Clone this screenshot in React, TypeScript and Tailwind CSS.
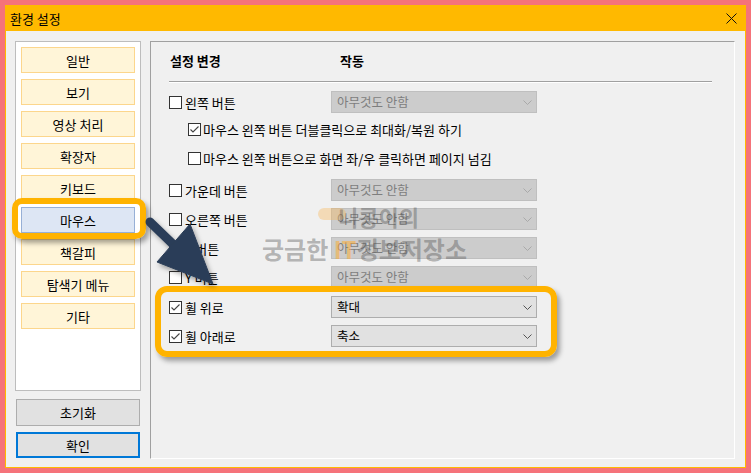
import React from "react";

const font = "font-['Noto_Sans_CJK_KR',sans-serif]";

const menu = ["일반", "보기", "영상 처리", "확장자", "키보드", "마우스", "책갈피", "탐색기 메뉴", "기타"];

function Check({ checked }: { checked?: boolean }) {
  return (
    <span className="w-[13px] h-[13px] shrink-0 border border-[#333333] bg-white flex items-center justify-center">
      {checked && (
        <svg width="11" height="11" viewBox="0 0 11 11">
          <path d="M1.5 5.5 L4 8 L9.5 2.5" fill="none" stroke="#444" strokeWidth="1.1" />
        </svg>
      )}
    </span>
  );
}

function Chevron({ color }: { color: string }) {
  return (
    <svg width="9" height="5" viewBox="0 0 9 5" className="mr-[4px]">
      <path d="M0.5 0.5 L4.5 4.5 L8.5 0.5" fill="none" stroke={color} strokeWidth="1" />
    </svg>
  );
}

function Select({ value, disabled }: { value: string; disabled?: boolean }) {
  return (
    <div
      className={
        disabled
          ? "w-[206px] h-[22px] border border-[#BFBFBF] bg-[#CCCCCC] flex items-center justify-between pl-[5px] text-[#7E7E7E] text-[12.5px]"
          : "w-[206px] h-[22px] border border-[#ADADAD] bg-[#E1E1E1] flex items-center justify-between pl-[5px] text-black text-[12.5px]"
      }
    >
      <span className="leading-none">{value}</span>
      <Chevron color={disabled ? "#A9A9A9" : "#555"} />
    </div>
  );
}

function Row({ label, checked, value, disabled, className }: { label: string; checked?: boolean; value: string; disabled?: boolean; className: string }) {
  return (
    <div className={"flex items-center h-[22px] " + className}>
      <div className="w-[162px] flex items-center gap-[3px]">
        <Check checked={checked} />
        <span className="leading-none">{label}</span>
      </div>
      <Select value={value} disabled={disabled} />
    </div>
  );
}

export default function App() {
  return (
    <div className={"relative w-[751px] h-[473px] bg-[#F5737A] p-[5px] text-[13px] text-black " + font}>
      <div className="flex flex-col h-full border border-[#FFB900]">
        <div className="h-[25px] bg-[#FFB900] flex items-center justify-between pl-[4px] pr-[8px]">
          <span className="leading-none">환경 설정</span>
          <svg width="11" height="11" viewBox="0 0 11 11">
            <path d="M0.5 0.5 L10.5 10.5 M10.5 0.5 L0.5 10.5" stroke="#111" strokeWidth="1" />
          </svg>
        </div>

        <div className="flex-1 bg-[#F0F0F0] flex pt-[10px] pl-[9px] pr-[10px] pb-[8px] gap-[9px]">
          {/* left menu */}
          <div className="w-[126px] flex flex-col">
            <div className="h-[350px] border border-[#BDBDBD] bg-white px-[5px] pt-[5px] flex flex-col gap-[6px]">
              {menu.map((m) => (
                <div
                  key={m}
                  className={
                    m === "마우스"
                      ? "h-[26px] border border-[#97B0D6] bg-[#DDE6F4] flex items-center justify-center"
                      : "h-[26px] border border-[#FCD68C] bg-[#FFF5D8] flex items-center justify-center"
                  }
                >
                  <span className="leading-none">{m}</span>
                </div>
              ))}
            </div>
            <div className="mt-[8px] mx-[1px] h-[27px] border border-[#ADADAD] bg-[#E1E1E1] flex items-center justify-center">
              <span className="leading-none">초기화</span>
            </div>
            <div className="mt-[6px] mx-[1px] h-[26px] border-2 border-[#0078D7] bg-[#E1E1E1] flex items-center justify-center">
              <span className="leading-none">확인</span>
            </div>
          </div>

          {/* right group */}
          <div className="flex-1 border-t border-l border-[#A0A0A0] border-r-white border-b-white border-r border-b pl-[18px] pt-[10px] flex flex-col">
            <div className="h-[16px] flex items-center font-bold">
              <span className="ml-[1px] w-[170px] leading-none">설정 변경</span>
              <span className="leading-none">작동</span>
            </div>
            <div className="mt-[13px] w-[543px] h-[2px] border-t border-[#A0A0A0] border-b border-b-white" />

            <Row className="mt-[8px]" label="왼쪽 버튼" value="아무것도 안함" disabled />
            <div className="mt-[5px] h-[22px] pl-[19px] flex items-center gap-[2px]">
              <Check checked />
              <span className="leading-none">마우스 왼쪽 버튼 더블클릭으로 최대화/복원 하기</span>
            </div>
            <div className="mt-[7px] h-[22px] pl-[19px] flex items-center gap-[2px]">
              <Check />
              <span className="leading-none">마우스 왼쪽 버튼으로 화면 좌/우 클릭하면 페이지 넘김</span>
            </div>
            <Row className="mt-[10px]" label="가운데 버튼" value="아무것도 안함" disabled />
            <Row className="mt-[7px]" label="오른쪽 버튼" value="아무것도 안함" disabled />
            <Row className="mt-[7px]" label="X 버튼" value="아무것도 안함" disabled />
            <Row className="mt-[7px]" label="Y 버튼" value="아무것도 안함" disabled />
            <Row className="mt-[8px]" label="휠 위로" value="확대" checked />
            <Row className="mt-[7px]" label="휠 아래로" value="축소" checked />
          </div>
        </div>
      </div>

      {/* watermark */}
      <div className="absolute left-[318px] top-[208px] w-[28px] h-[12px] rounded-full bg-[#F8B860]/40 pointer-events-none" />
      <div className="absolute left-[338px] top-[205px] text-[22px] font-bold leading-none text-[#505050]/40 pointer-events-none">
        니콩이의
      </div>
      <div className="absolute left-[262px] top-[237px] text-[24px] font-bold leading-none text-[#505050]/40 whitespace-nowrap pointer-events-none">
        궁금한 <span className="text-[#FFA928]/50">IT</span>정보저장소
      </div>

      {/* highlight boxes */}
      <div className="absolute left-[12px] top-[198px] w-[134px] h-[41px] border-[6px] border-[#FFB300] rounded-[10px] shadow-[3px_4px_5px_rgba(0,0,0,0.35)] pointer-events-none" />
      <div className="absolute left-[155px] top-[286px] w-[402px] h-[71px] border-[6px] border-[#FFB300] rounded-[12px] shadow-[3px_4px_5px_rgba(0,0,0,0.35)] pointer-events-none" />

      {/* arrow */}
      <svg className="absolute left-0 top-0 pointer-events-none" width="751" height="473" viewBox="0 0 751 473">
        <defs>
          <filter id="sh" x="-20%" y="-20%" width="150%" height="150%">
            <feDropShadow dx="2" dy="3" stdDeviation="2.5" floodColor="#000" floodOpacity="0.35" />
          </filter>
        </defs>
        <g filter="url(#sh)" fill="#2C3E58" stroke="#2C3E58">
          <line x1="150" y1="222" x2="180" y2="251" strokeWidth="9" strokeLinecap="round" />
          <polygon points="190,224 157,262 213,284" strokeWidth="1" strokeLinejoin="round" />
        </g>
      </svg>
    </div>
  );
}
